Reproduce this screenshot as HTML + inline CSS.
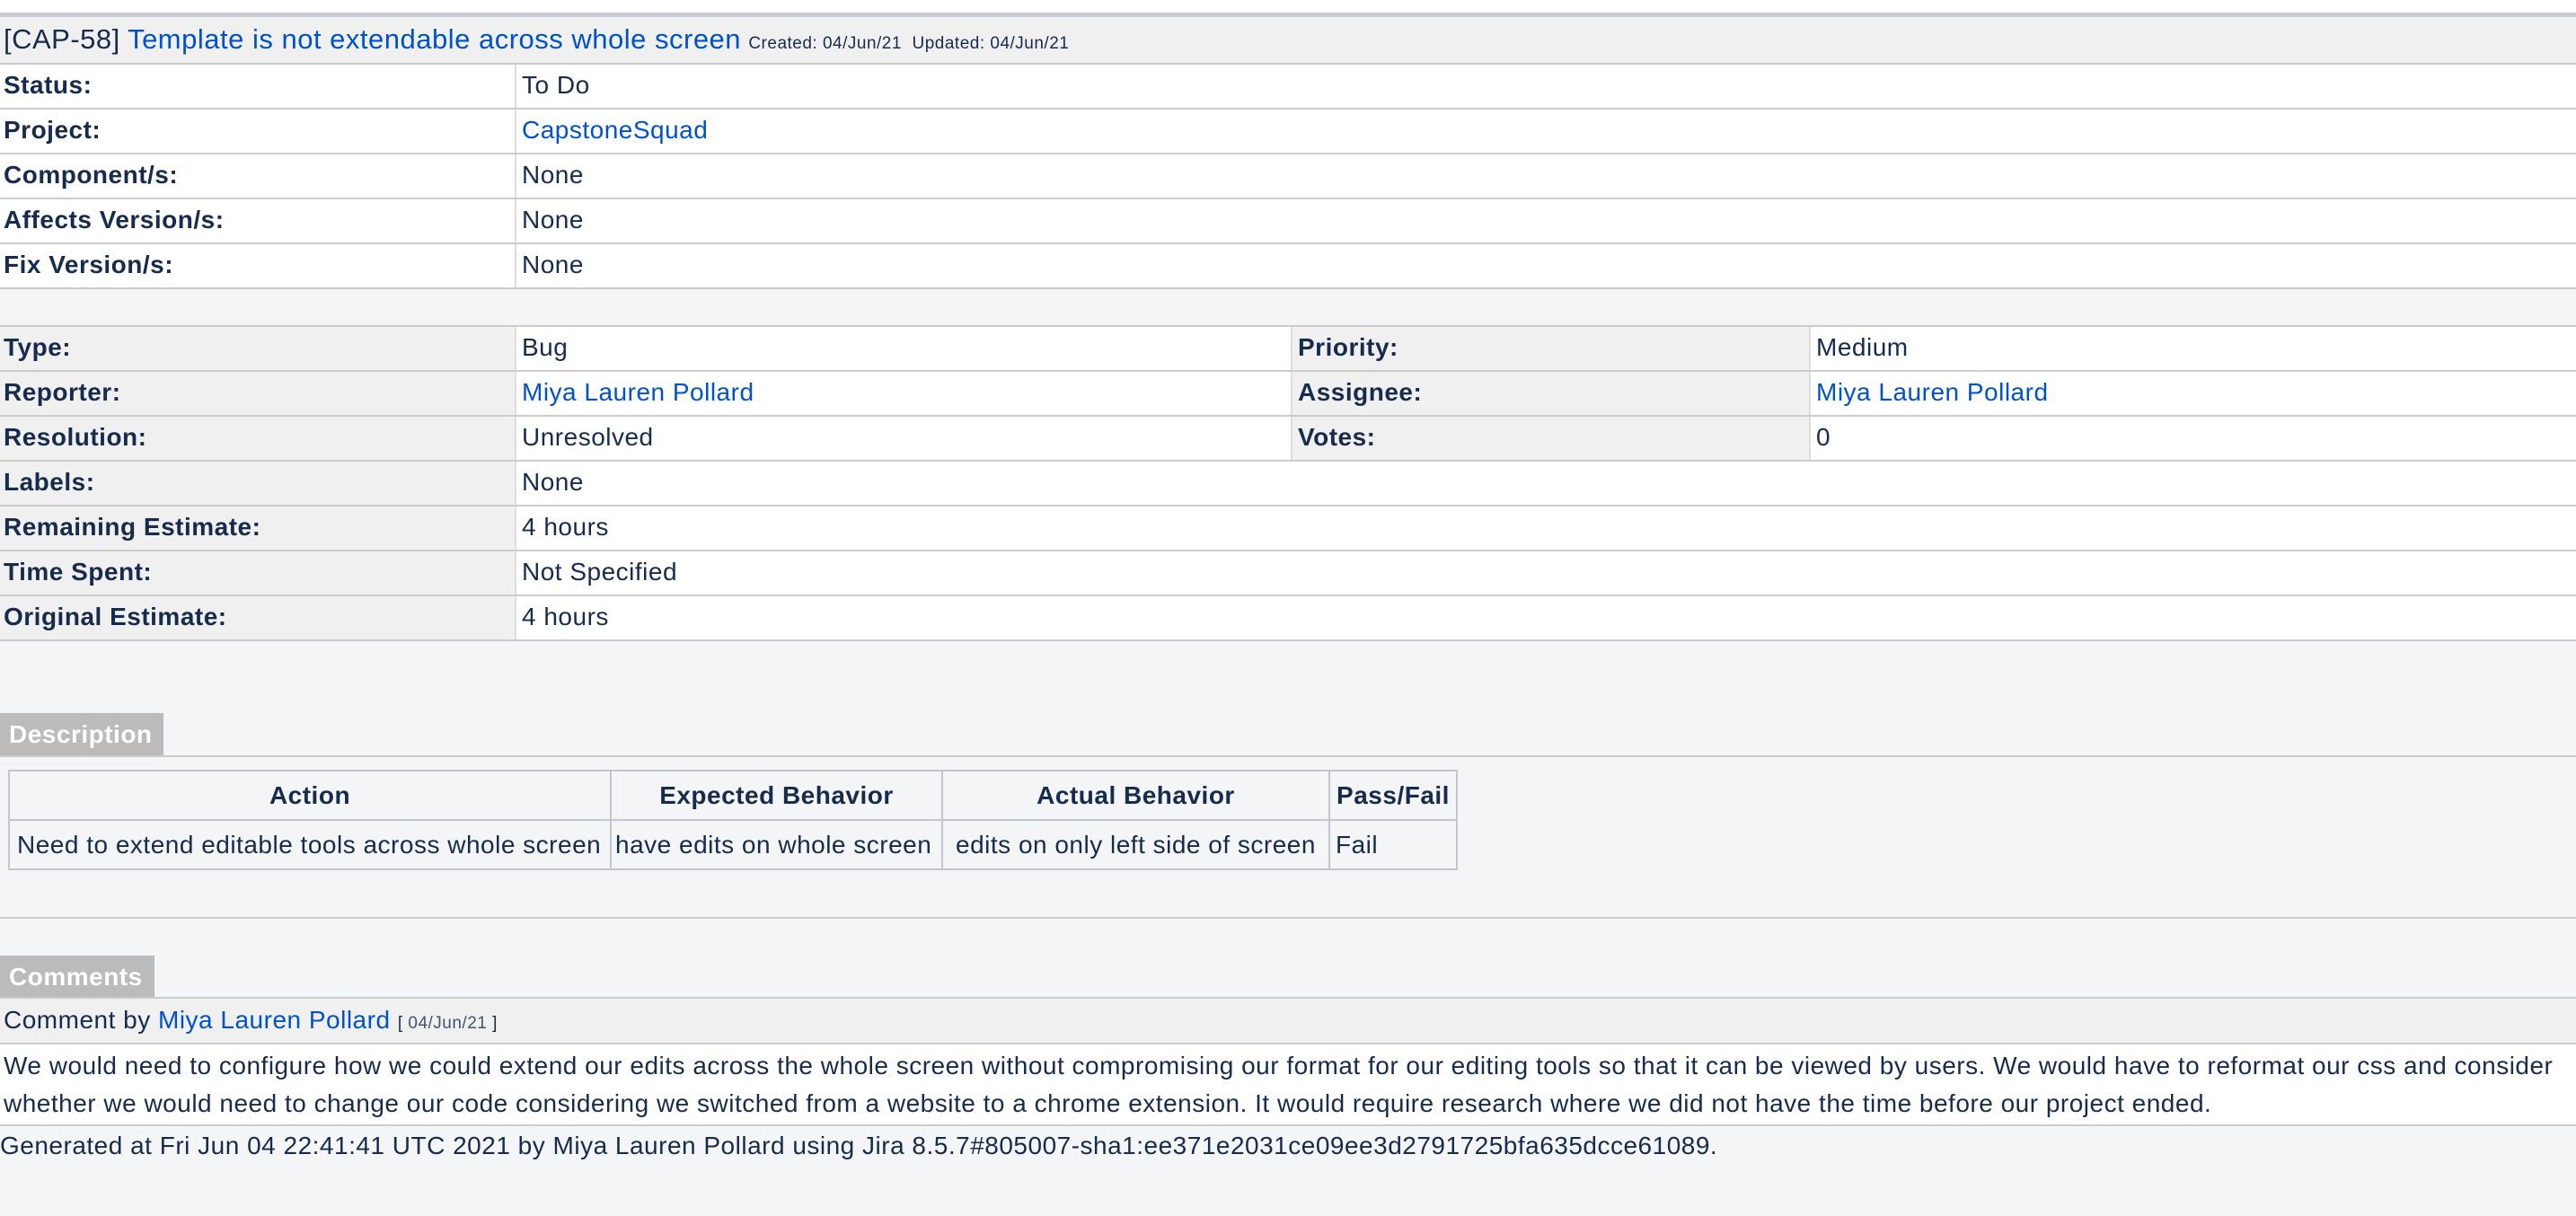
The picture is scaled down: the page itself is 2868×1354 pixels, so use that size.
<!DOCTYPE html>
<html><head><meta charset="utf-8"><style>
*{margin:0;padding:0;box-sizing:border-box}
body{width:2868px;height:1354px;background:#f4f5f7;font-family:"Liberation Sans",Arial,sans-serif;color:#172b4d;font-size:28px;letter-spacing:0.5px;position:relative;overflow:hidden}
.a{position:absolute}
a{color:#0052cc;text-decoration:none}
.row{position:absolute;left:0;width:2868px;height:50px;border-top:2px solid #ccc;background:#fff}
.c{position:absolute;top:0;height:48px;line-height:46px;padding-left:4px;white-space:nowrap}
.l{font-weight:bold}
.g{background:#f0f0f0}
.vb{border-left:2px solid #ddd}
table.d{position:absolute;left:9px;top:857px;border-collapse:collapse;background:#f4f5f7}
table.d td,table.d th{border:2px solid #c1c7d0;height:55px;padding:0 8px;white-space:nowrap;font-size:28px}
table.d th{font-weight:bold;text-align:center}
.tab{position:absolute;left:0;background:#bbb;color:#fff;font-weight:bold;height:47px;line-height:47px;padding-left:10px;font-size:28px}
</style></head><body>
<div class="a" style="left:0;top:0;width:2868px;height:14px;background:#fff"></div>
<div class="a" style="left:0;top:14px;width:2868px;height:5px;background:#c8cbd3"></div>
<div class="a" style="left:0;top:19px;width:2868px;height:51px;background:#f0f0f0;white-space:nowrap;line-height:50px;padding-left:4px">
<span style="font-size:31px">[CAP-58]</span> <a style="font-size:31px">Template is not extendable across whole screen</a> <span style="font-size:19px">Created: 04/Jun/21&nbsp; Updated: 04/Jun/21</span></div>

<div class="row" style="top:70px"><div class="c l" style="left:0">Status:</div><div class="c vb" style="left:573px;padding-left:6px">To Do</div></div>
<div class="row" style="top:120px"><div class="c l">Project:</div><div class="c vb" style="left:573px;padding-left:6px"><a>CapstoneSquad</a></div></div>
<div class="row" style="top:170px"><div class="c l">Component/s:</div><div class="c vb" style="left:573px;padding-left:6px">None</div></div>
<div class="row" style="top:220px"><div class="c l">Affects Version/s:</div><div class="c vb" style="left:573px;padding-left:6px">None</div></div>
<div class="row" style="top:270px;height:52px;border-bottom:2px solid #ccc"><div class="c l">Fix Version/s:</div><div class="c vb" style="left:573px;padding-left:6px">None</div></div>

<div class="row" style="top:362px"><div class="c l g" style="width:573px">Type:</div><div class="c vb" style="left:573px;padding-left:6px">Bug</div><div class="c l g vb" style="left:1437px;width:577px;padding-left:6px">Priority:</div><div class="c vb" style="left:2014px;padding-left:6px">Medium</div></div>
<div class="row" style="top:412px"><div class="c l g" style="width:573px">Reporter:</div><div class="c vb" style="left:573px;padding-left:6px"><a>Miya Lauren Pollard</a></div><div class="c l g vb" style="left:1437px;width:577px;padding-left:6px">Assignee:</div><div class="c vb" style="left:2014px;padding-left:6px"><a>Miya Lauren Pollard</a></div></div>
<div class="row" style="top:462px"><div class="c l g" style="width:573px">Resolution:</div><div class="c vb" style="left:573px;padding-left:6px">Unresolved</div><div class="c l g vb" style="left:1437px;width:577px;padding-left:6px">Votes:</div><div class="c vb" style="left:2014px;padding-left:6px">0</div></div>
<div class="row" style="top:512px"><div class="c l g" style="width:573px">Labels:</div><div class="c vb" style="left:573px;padding-left:6px">None</div></div>
<div class="row" style="top:562px"><div class="c l g" style="width:573px">Remaining Estimate:</div><div class="c vb" style="left:573px;padding-left:6px">4 hours</div></div>
<div class="row" style="top:612px"><div class="c l g" style="width:573px">Time Spent:</div><div class="c vb" style="left:573px;padding-left:6px">Not Specified</div></div>
<div class="row" style="top:662px;height:52px;border-bottom:2px solid #ccc"><div class="c l g" style="width:573px">Original Estimate:</div><div class="c vb" style="left:573px;padding-left:6px">4 hours</div></div>

<div class="tab" style="top:794px;width:182px">Description</div>
<div class="a" style="left:0;top:841px;width:2868px;height:2px;background:#ccc"></div>
<table class="d">
<tr><th style="width:670px">Action</th><th style="width:369px">Expected Behavior</th><th style="width:431px">Actual Behavior</th><th style="width:142px;padding:0 4px">Pass/Fail</th></tr>
<tr><td>Need to extend editable tools across whole screen</td><td style="padding:0 4px">have edits on whole screen</td><td style="text-align:center">edits on only left side of screen</td><td style="padding:0 6px">Fail</td></tr>
</table>
<div class="a" style="left:0;top:1021px;width:2868px;height:2px;background:#ccc"></div>

<div class="tab" style="top:1064px;width:172px">Comments</div>
<div class="a" style="left:0;top:1110px;width:2868px;height:2px;background:#ccc"></div>
<div class="a" style="left:0;top:1112px;width:2868px;height:49px;background:#f0f0f0;line-height:48px;padding-left:4px;white-space:nowrap">Comment by <a>Miya Lauren Pollard</a> <span style="font-size:19px">[ <span style="color:#42526e">04/Jun/21</span> ]</span></div>
<div class="a" style="left:0;top:1161px;width:2868px;height:2px;background:#ccc"></div>
<div class="a" style="left:0;top:1163px;width:2868px;height:89px;background:#fff;line-height:42px;padding:3px 0 0 4px;white-space:nowrap">We would need to configure how we could extend our edits across the whole screen without compromising our format for our editing tools so that it can be viewed by users. We would have to reformat our css and consider<br>whether we would need to change our code considering we switched from a website to a chrome extension. It would require research where we did not have the time before our project ended.</div>
<div class="a" style="left:0;top:1252px;width:2868px;height:2px;background:#ccc"></div>
<div class="a" style="left:0;top:1259px;white-space:nowrap;line-height:34px">Generated at Fri Jun 04 22:41:41 UTC 2021 by Miya Lauren Pollard using Jira 8.5.7#805007-sha1:ee371e2031ce09ee3d2791725bfa635dcce61089.</div>
</body></html>
